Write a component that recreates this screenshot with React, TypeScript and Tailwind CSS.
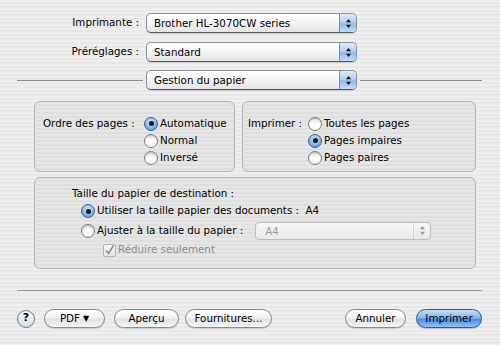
import type { ReactNode } from 'react';

const stripes =
  'bg-[repeating-linear-gradient(to_bottom,#efefef_0px,#efefef_2px,#e8e8e8_2px,#e8e8e8_4px)]';
const panelStripes =
  'bg-[repeating-linear-gradient(to_bottom,#e6e6e6_0px,#e6e6e6_2px,#dfdfdf_2px,#dfdfdf_4px)]';

function Arrows({ disabled = false }: { disabled?: boolean }) {
  const fill = disabled ? '#9a9a9a' : '#111';
  return (
    <svg width="7" height="11" viewBox="0 0 7 11">
      <path d="M3.5 1 L6 4.2 L1 4.2 Z" fill={fill} />
      <path d="M3.5 10 L6 6.8 L1 6.8 Z" fill={fill} />
    </svg>
  );
}

/** Aqua popup menu with the blue stepper end. */
function Popup({ label, width, disabled = false }: { label: string; width: string; disabled?: boolean }) {
  if (disabled) {
    return (
      <div
        className={`flex h-[18px] ${width} items-stretch overflow-hidden rounded-[4px] border border-[#bdbdbd] bg-gradient-to-b from-[#f7f7f7] to-[#e9e9e9]`}
      >
        <span className="flex-1 pl-[9px] leading-[16px] text-[#9b9b9b]">{label}</span>
        <span className="flex w-[17px] items-center justify-center border-l border-[#d2d2d2]">
          <Arrows disabled />
        </span>
      </div>
    );
  }
  return (
    <div
      className={`flex h-[20px] ${width} items-stretch overflow-hidden rounded-[5px] border border-[#8f8f8f] border-b-[#5d5650] bg-gradient-to-b from-white via-[#f4f4f4] to-[#e4e4e4] shadow-[0_1px_0_rgba(0,0,0,0.12)]`}
    >
      <span className="flex-1 pl-[7px] leading-[18px]">{label}</span>
      <span className="flex w-[17px] items-center justify-center border-l border-[#6f8fb8] bg-[linear-gradient(to_bottom,#dbeafb_0%,#b3d1f4_45%,#8ebbef_55%,#c4dcf8_100%)]">
        <Arrows />
      </span>
    </div>
  );
}

function Radio({ checked = false }: { checked?: boolean }) {
  if (checked) {
    return (
      <span className="flex h-[14px] w-[14px] shrink-0 items-center justify-center rounded-full border border-[#3b5f8f] bg-[radial-gradient(circle_at_50%_35%,#d7e9fc_0%,#8cbdf0_50%,#3f82d6_100%)]">
        <span className="h-[5px] w-[5px] rounded-full bg-[#111]" />
      </span>
    );
  }
  return (
    <span className="h-[14px] w-[14px] shrink-0 rounded-full border border-[#7d7d7d] bg-gradient-to-b from-[#dcdcdc] via-white to-[#f2f2f2] shadow-[inset_0_1px_1px_rgba(0,0,0,0.15)]" />
  );
}

function RadioRow({ checked, children, className = 'h-[17px]' }: { checked?: boolean; children: ReactNode; className?: string }) {
  return (
    <div className={`flex items-center gap-[2px] ${className}`}>
      <Radio checked={checked} />
      <span className="whitespace-nowrap">{children}</span>
    </div>
  );
}

function Pill({ children, width, className = '' }: { children: ReactNode; width: string; className?: string }) {
  return (
    <div
      className={`flex h-[19px] ${width} items-center justify-center rounded-full border border-[#8a8a8a] bg-[linear-gradient(to_bottom,#ffffff_0%,#f3f3f3_45%,#e2e2e2_55%,#f6f6f6_100%)] whitespace-nowrap shadow-[0_1px_1px_rgba(0,0,0,0.15)] ${className}`}
    >
      {children}
    </div>
  );
}

export default function App() {
  return (
    <div
      className={`h-[345px] w-[500px] overflow-hidden pt-[13px] text-[10.3px] text-black ${stripes}`}
      style={{ fontFamily: '"DejaVu Sans", sans-serif' }}
    >
      {/* printer + presets */}
      <div className="flex h-[20px] items-center">
        <span className="w-[139px] text-right">Imprimante :</span>
        <div className="ml-[7px]">
          <Popup label="Brother HL-3070CW series" width="w-[211px]" />
        </div>
      </div>
      <div className="mt-[9px] flex h-[20px] items-center">
        <span className="w-[139px] text-right">Préréglages :</span>
        <div className="ml-[7px]">
          <Popup label="Standard" width="w-[211px]" />
        </div>
      </div>

      {/* section selector */}
      <div className="mt-[8px] flex h-[20px] items-center pl-[17px] pr-[18px]">
        <div className="h-px w-[126px] bg-[#8c8c8c]" />
        <div className="ml-[3px]">
          <Popup label="Gestion du papier" width="w-[211px]" />
        </div>
        <div className="ml-[3px] h-px flex-1 bg-[#8c8c8c]" />
      </div>

      {/* page order / which pages */}
      <div className="mt-[11px] flex gap-[7px] pl-[34px]">
        <div className={`flex h-[71px] w-[201px] rounded-[6px] border border-[#b4b4b4] pl-[8px] pt-[13px] ${panelStripes}`}>
          <span className="w-[101px] whitespace-nowrap leading-[17px]">Ordre des pages :</span>
          <div>
            <RadioRow checked>Automatique</RadioRow>
            <RadioRow>Normal</RadioRow>
            <RadioRow>Inversé</RadioRow>
          </div>
        </div>
        <div className={`flex h-[71px] w-[234px] rounded-[6px] border border-[#b4b4b4] pl-[5px] pt-[13px] ${panelStripes}`}>
          <span className="w-[60px] whitespace-nowrap leading-[17px]">Imprimer :</span>
          <div>
            <RadioRow>Toutes les pages</RadioRow>
            <RadioRow checked>Pages impaires</RadioRow>
            <RadioRow>Pages paires</RadioRow>
          </div>
        </div>
      </div>

      {/* destination paper size */}
      <div className={`ml-[34px] mt-[5px] h-[92px] w-[442px] rounded-[6px] border border-[#b4b4b4] pt-[7px] ${panelStripes}`}>
        <div className="h-[17px] pl-[37px] leading-[17px]">Taille du papier de destination :</div>
        <div className="pl-[46px]">
          <RadioRow checked className="h-[18px]">
            Utiliser la taille papier des documents :&nbsp; A4
          </RadioRow>
          <div className="flex h-[21px] items-center">
            <RadioRow className="h-[21px]">Ajuster à la taille du papier :</RadioRow>
            <div className="ml-[12px]">
              <Popup label="A4" width="w-[176px]" disabled />
            </div>
          </div>
        </div>
        <div className="flex h-[18px] items-center gap-[2px] pl-[68px] text-[#8c8c8c]">
          <span className="flex h-[13px] w-[13px] items-center justify-center rounded-[2px] border border-[#b5b5b5] bg-gradient-to-b from-[#f8f8f8] to-[#e4e4e4]">
            <svg width="11" height="11" viewBox="0 0 11 11">
              <path d="M2 5.5 L4.5 8.5 L9.5 0.5" fill="none" stroke="#8a8a8a" strokeWidth="1.6" />
            </svg>
          </span>
          <span>Réduire seulement</span>
        </div>
      </div>

      {/* separator */}
      <div className="ml-[17px] mt-[21px] h-px w-[465px] bg-[#9c9c9c]" />

      {/* buttons */}
      <div className="mt-[18px] flex h-[19px] items-center pl-[17px] pr-[18px]">
        <div className="flex h-[18px] w-[18px] items-center justify-center rounded-full border border-[#7f7f7f] bg-[radial-gradient(circle_at_50%_30%,#ffffff_0%,#dfe6f0_60%,#b9c6d8_100%)] text-[11px] font-bold">
          ?
        </div>
        <Pill width="w-[61px]" className="ml-[9px]">
          PDF <span className="ml-[3px] text-[8px]">▼</span>
        </Pill>
        <Pill width="w-[65px]" className="ml-[9px]">
          Aperçu
        </Pill>
        <Pill width="w-[87px]" className="ml-[6px]">
          Fournitures...
        </Pill>
        <Pill width="w-[61px]" className="ml-auto">
          Annuler
        </Pill>
        <div className="ml-[10px] flex h-[19px] w-[66px] items-center justify-center rounded-full border border-[#2f5a91] bg-[linear-gradient(to_bottom,#c4defa_0%,#86b7ee_45%,#4d8fe0_55%,#8fc2f7_100%)] shadow-[0_1px_1px_rgba(0,0,0,0.2)]">
          Imprimer
        </div>
      </div>
    </div>
  );
}
